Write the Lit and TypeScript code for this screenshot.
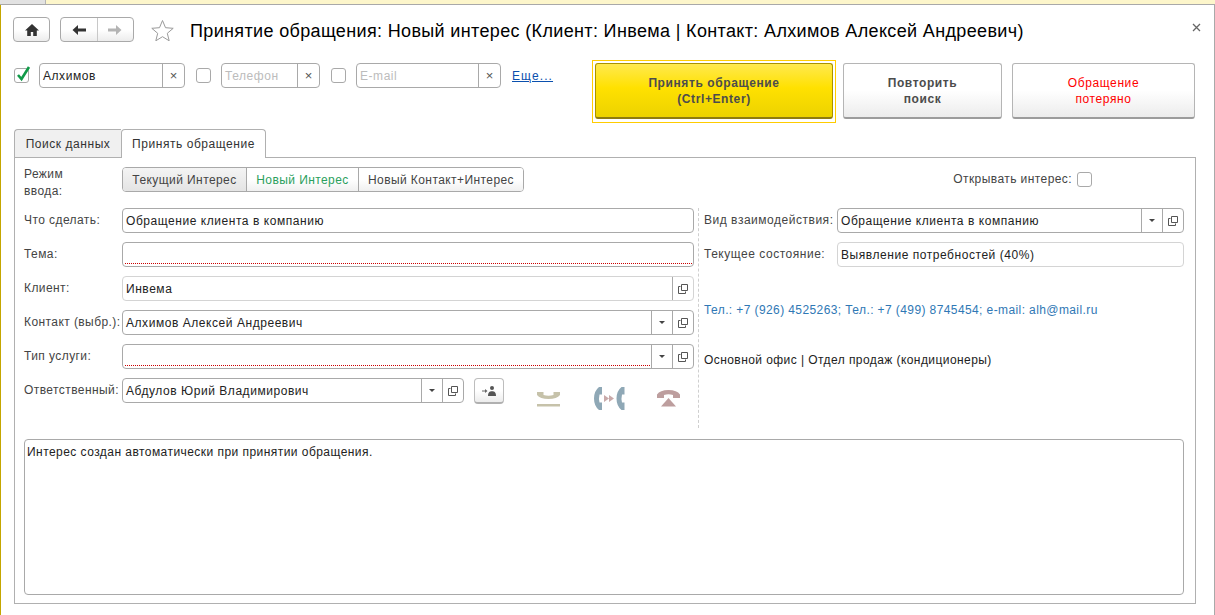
import { html, css, svg, LitElement, nothing } from 'lit';
import { customElement } from 'lit/decorators.js';

const openIcon = svg`<svg class="ico" width="10" height="10" viewBox="0 0 10 10" fill="none" stroke="#555"><path d="M3.500.5h6v6h-6z"/><path d="M2.500 2.500h-2v7h7v-2"/></svg>`;
const arrowDown = html`<span class="caret"></span>`;

@customElement('app-root')
export class AppRoot extends LitElement {
	static styles = css`
		:host {
			display: block;
			width: 1215px;
			height: 615px;
			overflow: hidden;
			background: #fff;
			color: #222;
			font: 12px/15px "Liberation Sans", Arial, sans-serif;
			letter-spacing: 0.55px;
		}
		* { box-sizing: border-box; }
		.strip {
			display: flex;
			height: 5px;
			border-bottom: 1px solid #a9a9a9;
			background: #fdf6cb;
		}
		.strip i { width: 46px; background: #e2e2e2; border-right: 1px solid #b5b5b5; }
		.shell {
			height: 610px;
			border-left: 1px solid #c4a600;
			border-right: 1px solid #a9a9a9;
			padding: 12px 19px 0 12px;
		}

		.head { display: flex; align-items: center; height: 25px; position: relative; }
		.tool {
			display: flex;
			align-items: center;
			justify-content: center;
			height: 25px;
			border: 1px solid #a9a9a9;
			border-radius: 4px;
			background: linear-gradient(#fff 50%, #ececec);
		}
		.home { width: 37px; }
		.nav { width: 74px; margin-left: 10px; }
		.nav span { flex: 1; height: 100%; display: flex; align-items: center; justify-content: center; }
		.nav span + span { border-left: 1px solid #c8c8c8; }
		.star { margin-left: 17px; }
		.title {
			margin: 2px 0 0 16px;
			font-size: 18px;
			line-height: 22px;
			letter-spacing: 0.35px;
			color: #000;
			white-space: nowrap;
		}
		.close { position: absolute; right: -6px; top: 6px; }

		.search { display: flex; align-items: flex-start; margin-top: 18px; height: 63px; }
		.filters { display: flex; align-items: center; margin-top: 3px; padding-left: 1px; width: 579px; }
		.check {
			flex: none;
			display: block;
			position: relative;
			width: 15px;
			height: 15px;
			border: 1px solid #a9a9a9;
			border-radius: 3px;
			background: #fff;
		}
		.check svg { position: absolute; left: 1px; top: -4px; }
		.filters .check { margin-right: 10px; }
		.filters .field { margin-right: 11px; height: 25px; }
		.more { color: #0b50ae; text-decoration: underline; letter-spacing: 1.1px; margin-top: 1px; }
		.primary-wrap { flex: none; width: 244px; height: 63px; padding: 2px; border: 1px solid #fc0; }
		.action {
			flex: none;
			display: flex;
			align-items: center;
			justify-content: center;
			text-align: center;
			height: 56px;
			padding-top: 1px;
			border: 1px solid #b5b5b5;
			border-bottom: 2px solid #9c9c9c;
			border-radius: 3px;
			background: linear-gradient(#fff 50%, #ececec);
			font-weight: 700;
			line-height: 16px;
			color: #4c4c4c;
			letter-spacing: 0.6px;
		}
		.primary {
			border-color: #a89200;
			border-bottom-color: #8d7b10;
			background: linear-gradient(#ffe94f, #ffe100 45%, #ecd200);
		}
		.again { width: 159px; margin: 3px 0 0 7px; }
		.lost { width: 183px; margin: 3px 0 0 10px; color: #f00; font-weight: 400; }

		.tabs { display: flex; margin-top: 6px; height: 29px; position: relative; padding-left: 1px; }
		.tab {
			height: 28px;
			line-height: 28px;
			border: 1px solid #b0b0b0;
			border-bottom: none;
			border-radius: 4px 4px 0 0;
			background: #f0f0f0;
			text-align: center;
			color: #333;
		}
		.tab.one { width: 107px; border-radius: 4px 0 0 0; border-right: none; }
		.tab.two { width: 145px; height: 29px; background: #fff; position: relative; z-index: 1; }
		.panel {
			margin: -1px 0 0 1px;
			width: 1182px;
			height: 447px;
			border: 1px solid #b0b0b0;
			padding: 9px 10px 0 9px;
		}
		.mode { display: flex; height: 41px; align-items: flex-start; }
		.label { color: #444; letter-spacing: 0.42px; white-space: nowrap; }
		.mode .label { width: 98px; line-height: 17px; margin-top: -1px; }
		.seg { display: flex; height: 25px; border: 1px solid #a9a9a9; border-radius: 4px; overflow: hidden; letter-spacing: 0.42px; }
		.seg span { line-height: 24px; text-align: center; background: linear-gradient(#fff 50%, #f0f0f0); color: #444; }
		.seg span + span { border-left: 1px solid #a9a9a9; }
		.seg .on { width: 123px; background: linear-gradient(#f4f4f4, #e4e4e4); }
		.seg .green { width: 112px; color: #2b9f5d; }
		.seg .wide { width: 165px; }
		.mode .open-flag { width: auto; margin: 4px 93px 0 auto; display: flex; align-items: center; gap: 5px; }

		.cols { display: flex; height: 220px; }
		.left { width: 670px; display: flex; flex-direction: column; gap: 9px; }
		.divider { width: 1px; margin-left: 4px; border-left: 1px dashed #cfcfcf; }
		.right { margin-left: 5px; width: 480px; display: flex; flex-direction: column; gap: 9px; }
		.row { display: grid; grid-template-columns: 98px 1fr; align-items: center; height: 25px; }
		.right .row { grid-template-columns: 133px 1fr; }
		.right .label { letter-spacing: 0.52px; }
		.field {
			display: flex;
			height: 25px;
			border: 1px solid #a9a9a9;
			border-radius: 4px;
			background: #fff;
		}
		.field.soft { border-color: #d4d4d4; }
		.value {
			flex: 1;
			min-width: 0;
			padding-left: 3px;
			line-height: 24px;
			white-space: nowrap;
		}
		.hint { color: #bcbcbc; }
		.req { flex: 1; align-self: flex-end; margin: 0 1px 2px 2px; border-bottom: 1px dotted #c00; }
		.btn {
			flex: none;
			width: 21px;
			display: flex;
			align-items: center;
			justify-content: center;
			border-left: 1px solid #a9a9a9;
		}
		.x { width: 22px; font-size: 13px; color: #555; letter-spacing: 0; }
		.caret {
			width: 0;
			height: 0;
			border: 3px solid transparent;
			border-top: 3px solid #444;
			border-bottom: none;
		}
		.ico { display: block; }
		.owner { display: flex; align-items: flex-start; height: 25px; }
		.owner .field { width: 342px; }
		.assign { width: 30px; height: 26px; margin-left: 10px; border-color: #bdbdbd; border-bottom: 2px solid #b0b0b0; }
		.phones { display: flex; align-items: flex-start; height: 25px; }
		.phones svg { display: block; }
		.p1 { margin: 13px 0 0 33px; }
		.p2 { margin: 9px 0 0 34px; }
		.p3 { margin: 12px 0 0 32px; }
		.info { height: 18px; line-height: 18px; white-space: nowrap; }
		.phones-line { margin-top: 25px; color: #2f78b5; letter-spacing: 0.4px; }
		.office { margin-top: 23px; letter-spacing: 0.43px; }
		.memo {
			margin-top: 11px;
			width: 1160px;
			height: 156px;
			border: 1px solid #a9a9a9;
			border-radius: 4px;
			padding: 5px 2px;
			letter-spacing: 0.45px;
		}
	`;

	// text field with optional buttons on the right side
	private field(text: string, btns: string[] = [], cls = '') {
		return html`<div class="field ${cls}">
			${text === '' ? html`<div class="req"></div>` : html`<div class="value">${text}</div>`}
			${btns.map((b) => html`<div class="btn">${b === 'drop' ? arrowDown : openIcon}</div>`)}
		</div>`;
	}

	private filter(text: string, width: number, checked = false) {
		return html`
			<span class="check">${checked ? html`<svg width="15" height="17" viewBox="0 0 15 17"><path d="M2 10l3.500 4L13 2" fill="none" stroke="#109a48" stroke-width="2.600"/></svg>` : nothing}</span>
			<div class="field" style="width:${width}px">
				<div class="value ${checked ? '' : 'hint'}">${text}</div>
				<div class="btn x">×</div>
			</div>
		`;
	}

	private row(label: string, content: unknown) {
		return html`<div class="row"><div class="label">${label}</div>${content}</div>`;
	}

	render() {
		return html`
			<div class="strip"><i></i></div>
			<div class="shell">
				<div class="head">
					<div class="tool home">
						<svg width="16" height="14" viewBox="0 0 16 14"><path d="M8 1L1 7.500h2.200V13h3.600V9h2.400v4h3.600V7.500H15z" fill="#333"/></svg>
					</div>
					<div class="tool nav">
						<span><svg width="16" height="12" viewBox="0 0 16 12"><path d="M7 1L1.500 6 7 11V7.500h8v-3H7z" fill="#333"/></svg></span>
						<span><svg width="16" height="12" viewBox="0 0 16 12"><path d="M9 1l5.500 5L9 11V7.500H1v-3h8z" fill="#b4b4b4"/></svg></span>
					</div>
					<svg class="star" width="23" height="22" viewBox="0 0 23 22"><path d="M11.500 1.500l3 7.200 7.700.6-5.900 5 1.900 7.500-6.700-4.100-6.700 4.100 1.900-7.500-5.900-5 7.700-.6z" fill="#fff" stroke="#9a9a9a"/></svg>
					<div class="title">Принятие обращения: Новый интерес (Клиент: Инвема | Контакт: Алхимов Алексей Андреевич)</div>
					<svg class="close" width="9" height="9" viewBox="0 0 9 9"><path d="M1 1l7 7M8 1L1 8" stroke="#666" stroke-width="1.300"/></svg>
				</div>

				<div class="search">
					<div class="filters">
						${this.filter('Алхимов', 146, true)}
						${this.filter('Телефон', 99)}
						${this.filter('E-mail', 145)}
						<span class="more">Еще...</span>
					</div>
					<div class="primary-wrap"><div class="action primary">Принять обращение<br />(Ctrl+Enter)</div></div>
					<div class="action again">Повторить<br />поиск</div>
					<div class="action lost">Обращение<br />потеряно</div>
				</div>

				<div class="tabs">
					<div class="tab one">Поиск данных</div>
					<div class="tab two">Принять обращение</div>
				</div>
				<div class="panel">
					<div class="mode">
						<div class="label">Режим<br />ввода:</div>
						<div class="seg">
							<span class="on">Текущий Интерес</span>
							<span class="green">Новый Интерес</span>
							<span class="wide">Новый Контакт+Интерес</span>
						</div>
						<div class="open-flag label">Открывать интерес: <span class="check"></span></div>
					</div>
					<div class="cols">
						<div class="left">
							${this.row('Что сделать:', this.field('Обращение клиента в компанию'))}
							${this.row('Тема:', this.field(''))}
							${this.row('Клиент:', this.field('Инвема', ['open'], 'soft'))}
							${this.row('Контакт (выбр.):', this.field('Алхимов Алексей Андреевич', ['drop', 'open']))}
							${this.row('Тип услуги:', this.field('', ['drop', 'open']))}
							${this.row('Ответственный:', html`<div class="owner">
								${this.field('Абдулов Юрий Владимирович', ['drop', 'open'])}
								<div class="tool assign">
									<svg width="15" height="10" viewBox="0 0 15 10"><path d="M0 5h3.500" stroke="#666"/><path d="M3 3l2.500 2L3 7z" fill="#666"/><circle cx="10" cy="2" r="2" fill="#555"/><path d="M6 10c0-3.500 1.500-4.800 4-4.800s4 1.300 4 4.800z" fill="#555"/></svg>
								</div>
								<div class="phones">
									<svg class="p1" width="23" height="16" viewBox="0 0 23 16"><path d="M0 1h6.500v3q5 1.500 10 0V1H23v3q-3 4-11.500 4T0 4z" fill="#c6c2aa"/><path d="M0 13h23v2.500H0z" fill="#c6c2aa"/></svg>
									<svg class="p2" width="31" height="23" viewBox="0 0 31 23"><path d="M8 0v7.500H5.500q-1 4 0 8H8V23H5Q0 19 0 11.500T5 0z" fill="#8fa8b6"/><path d="M30.500 0v7.500H28q-1 4 0 8h2.500V23h-3q-5-4-5-11.500T27.500 0z" fill="#8fa8b6"/><path d="M10 8l5 3.500-5 3.500zM15 8l5 3.500-5 3.500z" fill="#c9aaaa"/></svg>
									<svg class="p3" width="23" height="17" viewBox="0 0 23 17"><path d="M0 8h7V5q4.500-1.500 9 0v3h7V4.500Q20 0 11.500 0T0 4.500z" fill="#bd9e9e"/><path d="M11.500 8L19 16.500H4z" fill="#bd9e9e"/></svg>
								</div>
							</div>`)}
						</div>
						<div class="divider"></div>
						<div class="right">
							${this.row('Вид взаимодействия:', this.field('Обращение клиента в компанию', ['drop', 'open']))}
							${this.row('Текущее состояние:', this.field('Выявление потребностей (40%)', [], 'soft'))}
							<div class="info phones-line">Тел.: +7 (926) 4525263; Тел.: +7 (499) 8745454; e-mail: alh@mail.ru</div>
							<div class="info office">Основной офис | Отдел продаж (кондиционеры)</div>
						</div>
					</div>
					<div class="memo">Интерес создан автоматически при принятии обращения.</div>
				</div>
			</div>
		`;
	}
}
